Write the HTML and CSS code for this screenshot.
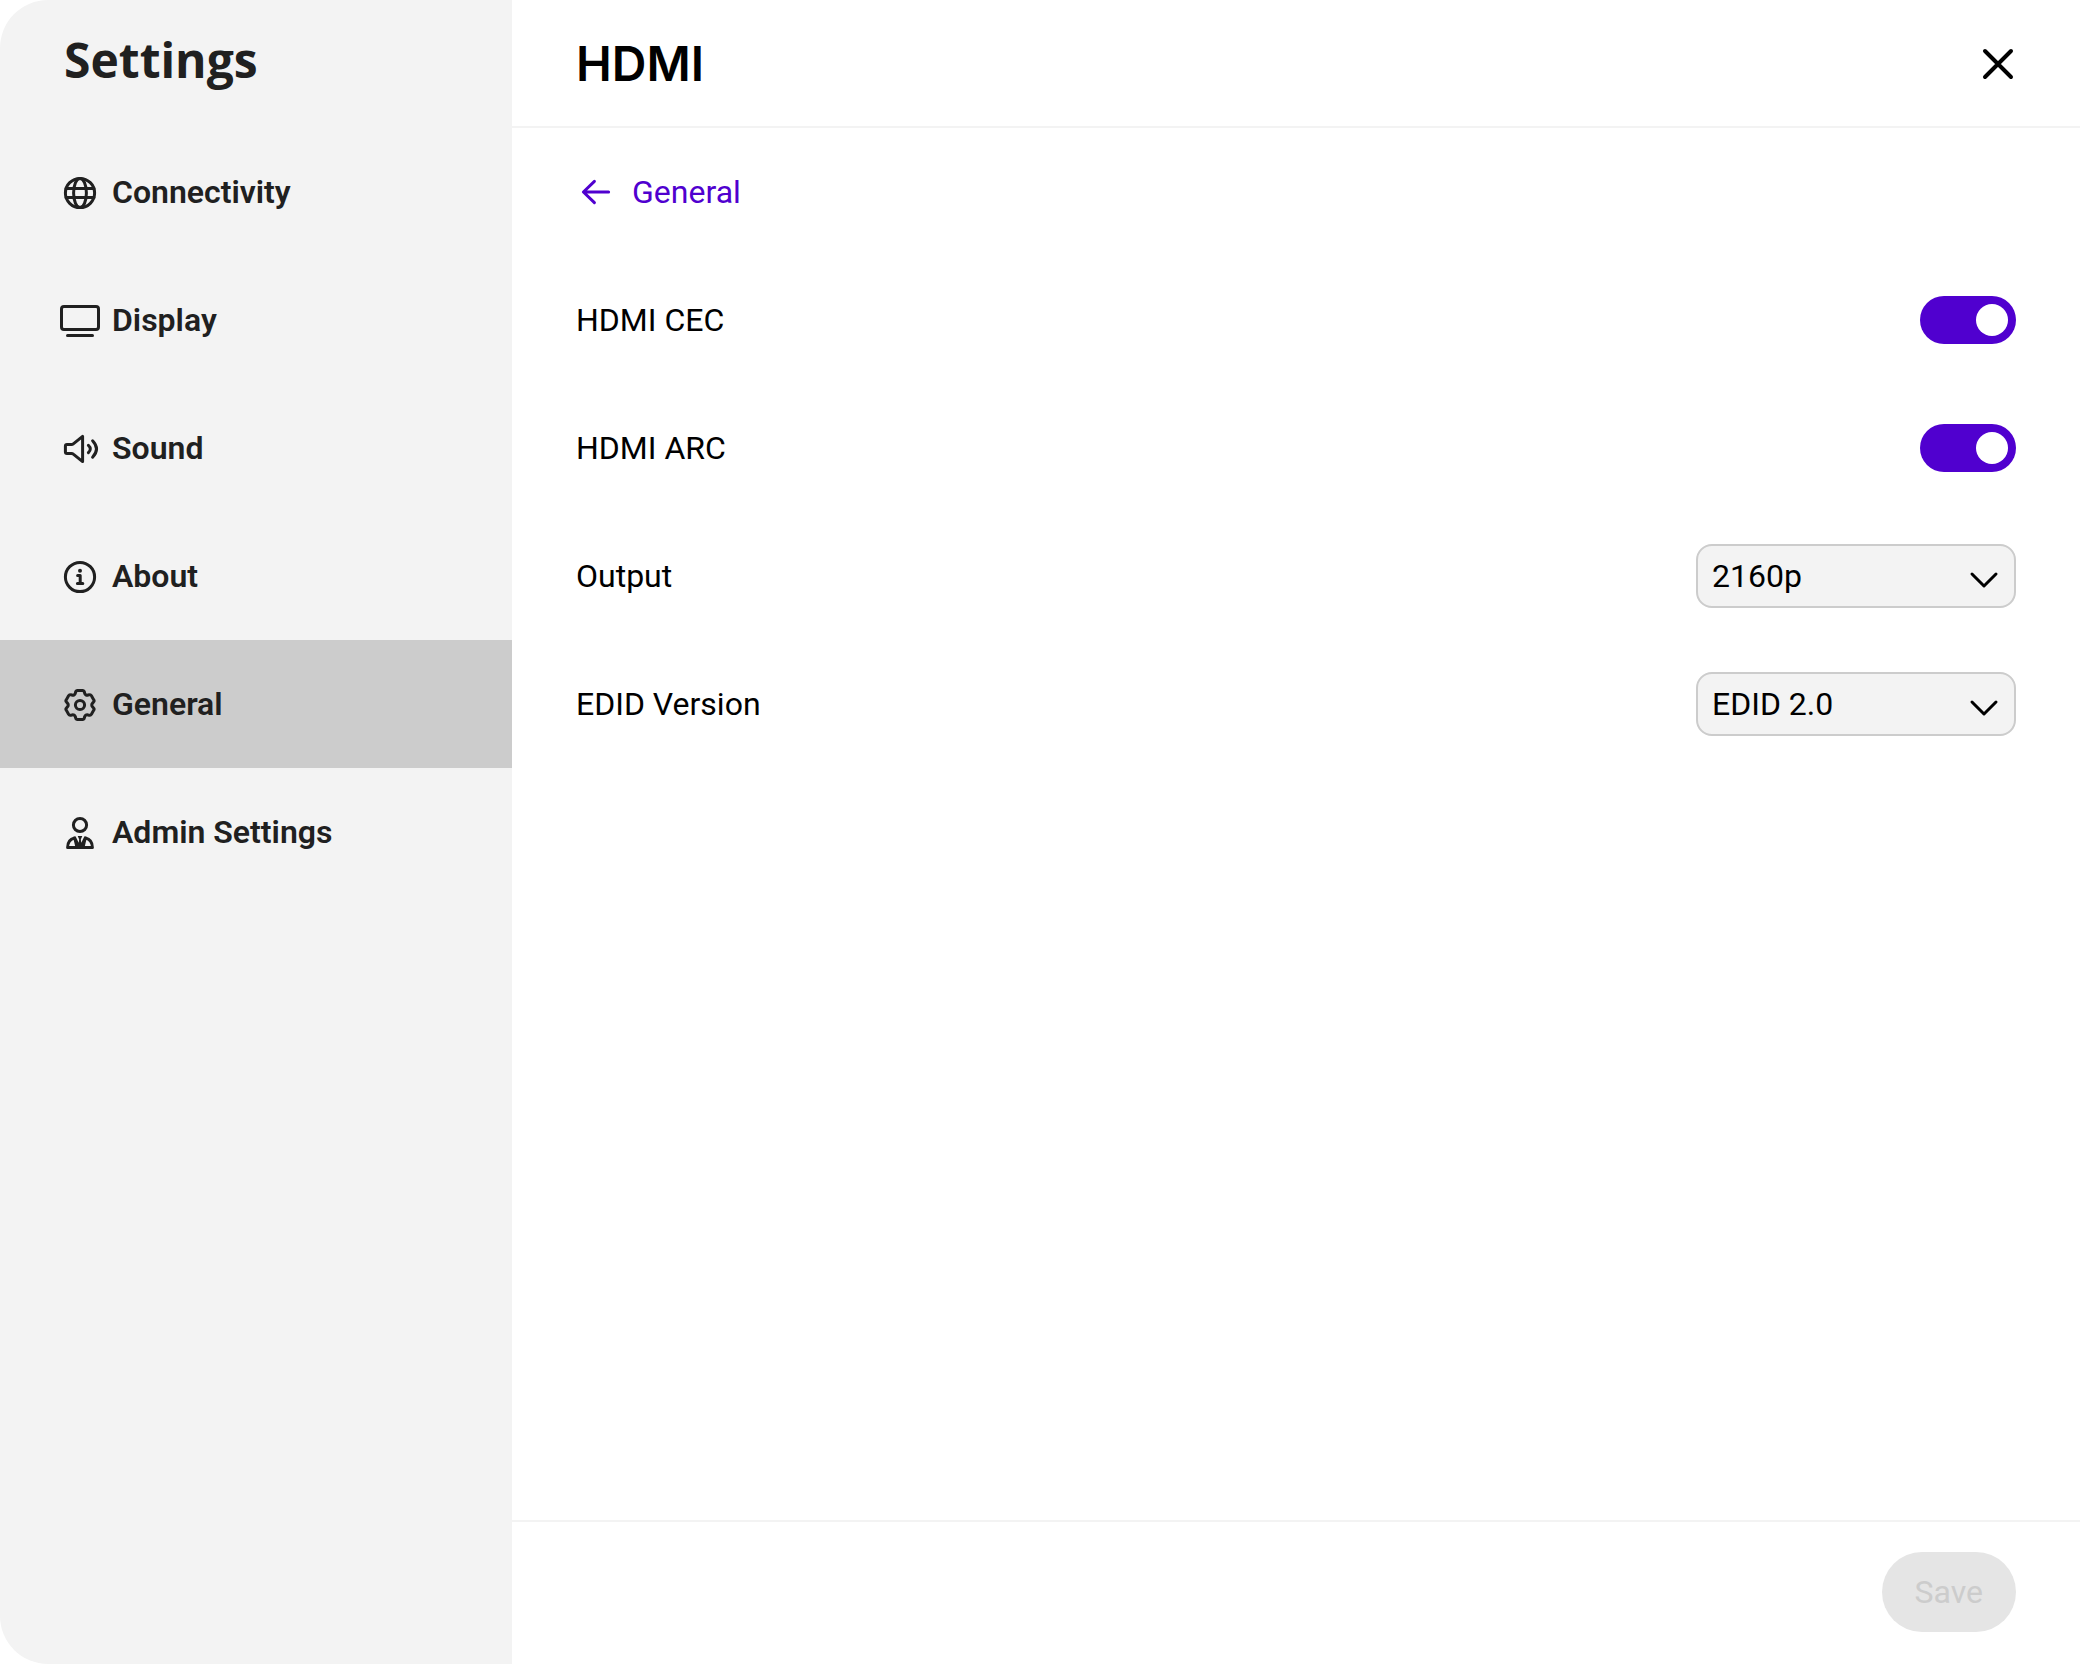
FILE: index.html
```html
<!DOCTYPE html>
<html lang="en">
<head>
    <meta charset="UTF-8">
    <meta name="viewport" content="width=device-width, initial-scale=1.0">
    <title>Settings - HDMI</title>
    <link rel="stylesheet" href="styles.css">
</head>
<body>
    <div class="settings">
        <aside class="sidebar">
            <h1 class="sidebar-title">Settings</h1>
            <nav class="menu">
                <a class="menu-item" href="#connectivity">
                    <svg class="icon" viewBox="-24 -25 48 48" aria-hidden="true">
                        <circle r="14.6"/>
                        <ellipse rx="6.4" ry="14.6"/>
                        <path d="M-14-4.6H14M-14 4.6H14"/>
                    </svg>
                    Connectivity
                </a>
                <a class="menu-item" href="#display">
                    <svg class="icon" viewBox="-24 -25 48 48" aria-hidden="true">
                        <rect x="-18.5" y="-14.5" width="37" height="23" rx="2.5"/>
                        <path d="M-12.5 14.5H12.5"/>
                    </svg>
                    Display
                </a>
                <a class="menu-item" href="#sound">
                    <svg class="icon" viewBox="-24 -25 48 48" aria-hidden="true">
                        <path d="M-13-4.5H-8.5Q-7.5-4.5-6.7-5.2L2.6-12.6V12.6L-6.7 5.2Q-7.5 4.5-8.5 4.5H-13Q-14.6 4.5-14.6 3V-3Q-14.6-4.5-13-4.5Z"/>
                        <path d="M8.4-3.6Q12.2 0 8.4 3.6M12.6-8.2Q20.4 0 12.6 8.2"/>
                    </svg>
                    Sound
                </a>
                <a class="menu-item" href="#about">
                    <svg class="icon" viewBox="-24 -25 48 48" aria-hidden="true">
                        <circle r="14.6"/>
                        <circle class="solid" cy="-6.2" r="2"/>
                        <path d="M-2.4-1.4H.2V6.4M-2.6 6.4H2.8"/>
                    </svg>
                    About
                </a>
                <a class="menu-item active" href="#general" aria-current="page">
                    <svg class="icon" viewBox="-24 -25 48 48" aria-hidden="true">
                        <path d="M-2.5-14.5H2.5Q4-14.5 4.3-13L4.6-12C4.9-10.3 6.5-9.4 8.1-10L9.1-10.2Q10.6-10.7 11.3-9.4L13.8-5.1Q14.6-3.8 13.4-2.8L12.7-2C11.4-.9 11.4.9 12.7 2L13.4 2.8Q14.6 3.8 13.8 5.1L11.3 9.4Q10.6 10.7 9.1 10.2L8.1 10C6.5 9.4 4.9 10.3 4.6 12L4.3 13Q4 14.5 2.5 14.5H-2.5Q-4 14.5-4.3 13L-4.6 12C-4.9 10.3-6.5 9.4-8.1 10L-9.1 10.2Q-10.6 10.7-11.3 9.4L-13.8 5.1Q-14.6 3.8-13.4 2.8L-12.7 2C-11.4.9-11.4-.9-12.7-2L-13.4-2.8Q-14.6-3.8-13.8-5.1L-11.3-9.4Q-10.6-10.7-9.1-10.2L-8.1-10C-6.5-9.4-4.9-10.3-4.6-12L-4.3-13Q-4-14.5-2.5-14.5Z"/>
                        <circle r="4.6"/>
                    </svg>
                    General
                </a>
                <a class="menu-item" href="#admin">
                    <svg class="icon" viewBox="-24 -25 48 48" aria-hidden="true">
                        <circle cy="-8" r="6.6"/>
                        <path d="M-5.5 5C-9.6 6-12.4 9.5-12.4 14.6H12.4C12.4 9.5 9.6 6 5.5 5"/>
                        <path class="solid" d="M-7 4L-4.3 3.6L-1.3 9.8L-.8 6.4L-2.3 3H2.3L.8 6.4L1.3 9.8L4.3 3.6L7 4L4.4 15H-4.4Z"/>
                    </svg>
                    Admin Settings
                </a>
            </nav>
        </aside>

        <main class="content">
            <header class="content-header">
                <h2 class="content-title">HDMI</h2>
                <button class="close-button" type="button" aria-label="Close">
                    <svg viewBox="0 0 36 36" aria-hidden="true">
                        <path d="M5 5L31 31M31 5L5 31"/>
                    </svg>
                </button>
            </header>

            <div class="content-body">
                <a class="back-link" href="#general">
                    <svg class="back-arrow" viewBox="-20 -20 40 40" aria-hidden="true">
                        <path d="M12.6 0H-12M-1.6-10.6L-12.6 0L-1.6 10.6"/>
                    </svg>
                    General
                </a>

                <div class="row">
                    <label for="hdmi-cec">HDMI CEC</label>
                    <input class="toggle" type="checkbox" role="switch" id="hdmi-cec" checked>
                </div>
                <div class="row">
                    <label for="hdmi-arc">HDMI ARC</label>
                    <input class="toggle" type="checkbox" role="switch" id="hdmi-arc" checked>
                </div>
                <div class="row">
                    <label for="output">Output</label>
                    <div class="select-box">
                        <select id="output">
                            <option>2160p</option>
                            <option>1080p</option>
                            <option>720p</option>
                        </select>
                        <svg class="chevron" viewBox="0 0 32 32" aria-hidden="true">
                            <path d="M4 10L16 22L28 10"/>
                        </svg>
                    </div>
                </div>
                <div class="row">
                    <label for="edid">EDID Version</label>
                    <div class="select-box">
                        <select id="edid">
                            <option>EDID 2.0</option>
                            <option>EDID 1.4</option>
                        </select>
                        <svg class="chevron" viewBox="0 0 32 32" aria-hidden="true">
                            <path d="M4 10L16 22L28 10"/>
                        </svg>
                    </div>
                </div>
            </div>

            <footer class="content-footer">
                <button class="save-button" type="submit" disabled>Save</button>
            </footer>
        </main>
    </div>
</body>
</html>
```
FILE: styles.css
```css
:root {
    --accent: #5000cf;
    --text: #202020;
    --panel: #f3f3f3;
    --border: #cccccc;
}

* {
    box-sizing: border-box;
}

body {
    margin: 0;
    background-color: #ffffff;
    color: #000000;
    font-family: Roboto, sans-serif;
    font-size: 32px;
    line-height: 40px;
}

.settings {
    display: flex;
    min-height: 100vh;
}

svg {
    fill: none;
    stroke: currentColor;
    stroke-linecap: round;
    stroke-linejoin: round;
}

/* Sidebar */
.sidebar {
    flex: 0 0 512px;
    background-color: var(--panel);
    color: var(--text);
    border-radius: 48px 0 0 48px;
    overflow: hidden;
}

.sidebar-title {
    display: flex;
    align-items: center;
    height: 128px;
    margin: 0;
    padding: 0 64px 8px;
    font-family: "Open Sans", sans-serif;
    font-size: 48px;
    font-weight: 700;
}

.menu-item {
    display: flex;
    align-items: center;
    gap: 8px;
    height: 128px;
    padding: 0 56px;
    color: inherit;
    font-weight: 600;
    text-decoration: none;
}

.menu-item.active {
    background-color: var(--border);
}

.icon {
    width: 48px;
    height: 48px;
    stroke-width: 3;
}

.icon .solid {
    fill: currentColor;
    stroke: none;
}

/* Content */
.content {
    flex: 1;
    display: flex;
    flex-direction: column;
}

.content-header {
    display: flex;
    align-items: center;
    justify-content: space-between;
    height: 128px;
    padding: 2px 64px 0;
    border-bottom: 2px solid var(--panel);
}

.content-title {
    margin: 0;
    font-family: Inter, sans-serif;
    font-size: 48px;
    font-weight: 600;
}

.close-button {
    width: 36px;
    height: 36px;
    padding: 0;
    border: none;
    background: none;
    color: inherit;
    cursor: pointer;
}

.close-button svg {
    display: block;
    stroke-width: 4;
}

.content-body {
    flex: 1;
    padding: 0 64px;
}

.back-link {
    display: inline-flex;
    align-items: center;
    gap: 16px;
    height: 128px;
    color: var(--accent);
    text-decoration: none;
}

.back-arrow {
    width: 40px;
    height: 40px;
    stroke-width: 3;
}

.row {
    display: flex;
    align-items: center;
    justify-content: space-between;
    height: 128px;
}

.toggle {
    appearance: none;
    display: flex;
    width: 96px;
    height: 48px;
    margin: 0;
    padding: 8px;
    border-radius: 24px;
    background-color: var(--border);
    cursor: pointer;
}

.toggle::before {
    content: "";
    width: 32px;
    height: 32px;
    border-radius: 50%;
    background-color: #ffffff;
}

.toggle:checked {
    justify-content: flex-end;
    background-color: var(--accent);
}

.select-box {
    position: relative;
    width: 320px;
}

.select-box select {
    appearance: none;
    display: block;
    width: 100%;
    height: 64px;
    padding: 0 64px 0 14px;
    border: 2px solid var(--border);
    border-radius: 16px;
    background-color: var(--panel);
    color: inherit;
    font: inherit;
}

.chevron {
    position: absolute;
    top: 20px;
    right: 16px;
    width: 32px;
    height: 32px;
    stroke-width: 3;
    pointer-events: none;
}

/* Footer */
.content-footer {
    display: flex;
    align-items: center;
    justify-content: flex-end;
    height: 144px;
    padding: 0 64px 2px;
    border-top: 2px solid var(--panel);
}

.save-button {
    height: 80px;
    padding: 0 33px;
    border: none;
    border-radius: 40px;
    background-color: #e5e5e5;
    color: var(--border);
    font: inherit;
}
```
